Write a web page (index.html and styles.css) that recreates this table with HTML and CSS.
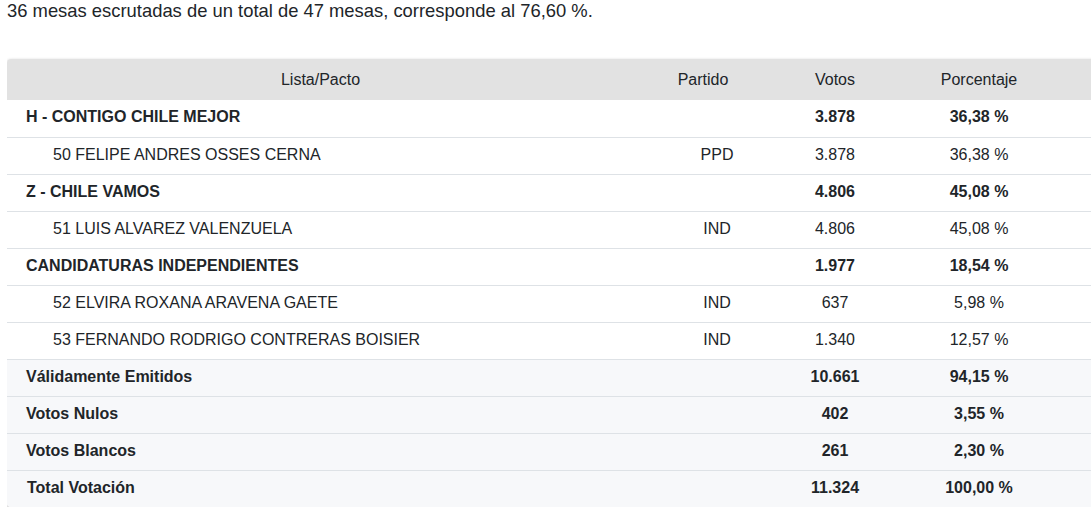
FILE: index.html
```html
<!DOCTYPE html>
<html lang="es">
<head>
<meta charset="utf-8">
<title>Resultados</title>
<link rel="stylesheet" href="styles.css">
</head>
<body>
<p class="summary">36 mesas escrutadas de un total de 47 mesas, corresponde al 76,60 %.</p>
<div class="card">
<table class="results">
<colgroup>
<col class="c-lista"><col class="c-partido"><col class="c-votos"><col class="c-pct"><col class="c-extra">
</colgroup>
<thead>
<tr><th>Lista/Pacto</th><th>Partido</th><th>Votos</th><th>Porcentaje</th><th></th></tr>
</thead>
<tbody>
<tr class="pacto"><td class="name">H - CONTIGO CHILE MEJOR</td><td></td><td class="num">3.878</td><td class="num">36,38 %</td><td></td></tr>
<tr class="cand"><td class="name">50 FELIPE ANDRES OSSES CERNA</td><td class="party">PPD</td><td class="num">3.878</td><td class="num">36,38 %</td><td></td></tr>
<tr class="pacto"><td class="name">Z - CHILE VAMOS</td><td></td><td class="num">4.806</td><td class="num">45,08 %</td><td></td></tr>
<tr class="cand"><td class="name">51 LUIS ALVAREZ VALENZUELA</td><td class="party">IND</td><td class="num">4.806</td><td class="num">45,08 %</td><td></td></tr>
<tr class="pacto"><td class="name">CANDIDATURAS INDEPENDIENTES</td><td></td><td class="num">1.977</td><td class="num">18,54 %</td><td></td></tr>
<tr class="cand"><td class="name">52 ELVIRA ROXANA ARAVENA GAETE</td><td class="party">IND</td><td class="num">637</td><td class="num">5,98 %</td><td></td></tr>
<tr class="cand"><td class="name">53 FERNANDO RODRIGO CONTRERAS BOISIER</td><td class="party">IND</td><td class="num">1.340</td><td class="num">12,57 %</td><td></td></tr>
<tr class="total"><td class="name">Válidamente Emitidos</td><td></td><td class="num">10.661</td><td class="num">94,15 %</td><td></td></tr>
<tr class="total"><td class="name">Votos Nulos</td><td></td><td class="num">402</td><td class="num">3,55 %</td><td></td></tr>
<tr class="total"><td class="name">Votos Blancos</td><td></td><td class="num">261</td><td class="num">2,30 %</td><td></td></tr>
<tr class="total grand"><td class="name">Total Votación</td><td></td><td class="num">11.324</td><td class="num">100,00 %</td><td></td></tr>
</tbody>
</table>
</div>
</body>
</html>
```
FILE: styles.css
```css
html, body {
  overflow: hidden;
}
body {
  margin: 0 0 0 7px;
  font-family: "Liberation Sans", Arial, sans-serif;
  color: #212529;
  background: #fff;
  width: 1160px;
}
.summary {
  margin: 0;
  font-size: 18.4px;
  line-height: 21px;
  height: 59px;
  box-sizing: border-box;
}
.card {
  width: 1140px;
  border-radius: 4px 0 0 4px;
  box-shadow: 0 1px 3px rgba(0,0,0,0.32);
  overflow: hidden;
}
.results {
  width: 100%;
  border-collapse: collapse;
  table-layout: fixed;
  font-size: 16px;
}
.c-lista { width: 627px; }
.c-partido { width: 138px; }
.c-votos { width: 126px; }
.c-pct { width: 162px; }
.results th {
  background: #e2e2e2;
  font-weight: normal;
  height: 41px;
  padding: 0;
  text-align: center;
  vertical-align: middle;
}
.results td {
  height: 37px;
  padding: 0 0 2px 0;
  box-sizing: border-box;
  border-top: 1px solid #dee2e6;
  vertical-align: middle;
  text-align: center;
}
.results tbody tr:first-child td { border-top: none; }
.results .name { text-align: left; padding-left: 19px; }
.results .cand .name { padding-left: 46px; }
.results .party { padding-left: 28px; }
.pacto td, .total td { font-weight: bold; }
.total td { background: #f7f8fa; }
.grand .name { padding-left: 20px; }
```
